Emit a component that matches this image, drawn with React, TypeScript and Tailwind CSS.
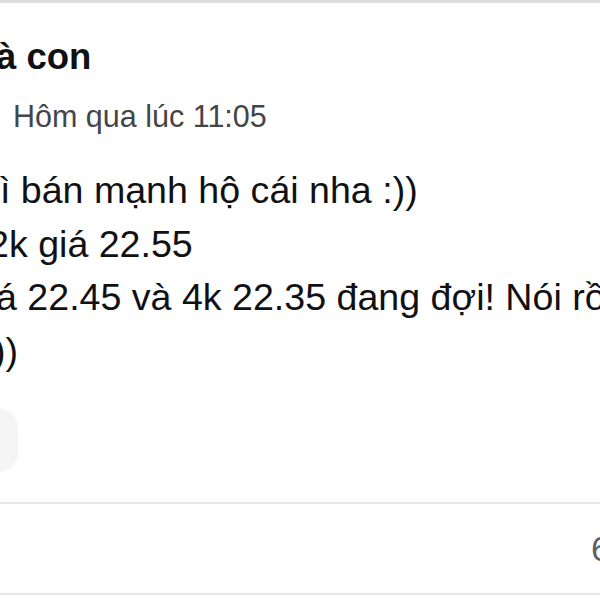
import React from 'react';

const lines = [
  { text: 'hì bán mạnh hộ cái nha :))', shift: '-ml-[21px]' },
  { text: '2k giá 22.55', shift: '-ml-[12px]' },
  { text: 'á 22.45 và 4k 22.35 đang đợi! Nói rồi mà', shift: '-ml-[4px]' },
  { text: '))', shift: '-ml-[7px]' },
];

export default function App() {
  return (
    <div
      className="w-[600px] h-[600px] overflow-hidden bg-white text-[#111113]"
      style={{ fontFamily: '"Liberation Sans", Arial, sans-serif' }}
    >
      <div className="h-[3px] bg-[#dcdcde]" />

      <div className="pt-[34px]">
        <div className="-ml-[4px] text-[36.5px] font-bold leading-[40px] whitespace-nowrap">
          à con
        </div>
        <div className="mt-[21px] pl-[13px] text-[30.5px] leading-[36px] text-[#444548] whitespace-nowrap">
          Hôm qua lúc 11:05
        </div>
      </div>

      <div className="mt-[30px] text-[37.6px] leading-[53.5px] whitespace-nowrap">
        {lines.map((line) => (
          <div key={line.text} className={line.shift}>
            {line.text}
          </div>
        ))}
      </div>

      <div className="mt-[31px] h-[63px] w-[19px] -ml-[1px] rounded-r-[30px] bg-[#f5f5f6]" />

      <div className="mt-[30px] h-[2px] bg-[#e6e6e8]" />
      <div className="h-[89px] pt-[25px] pl-[591px] whitespace-nowrap">
        <span className="text-[35px] leading-[40px] text-[#5f6064]">6</span>
      </div>
      <div className="h-[2px] bg-[#e6e6e8]" />
    </div>
  );
}
